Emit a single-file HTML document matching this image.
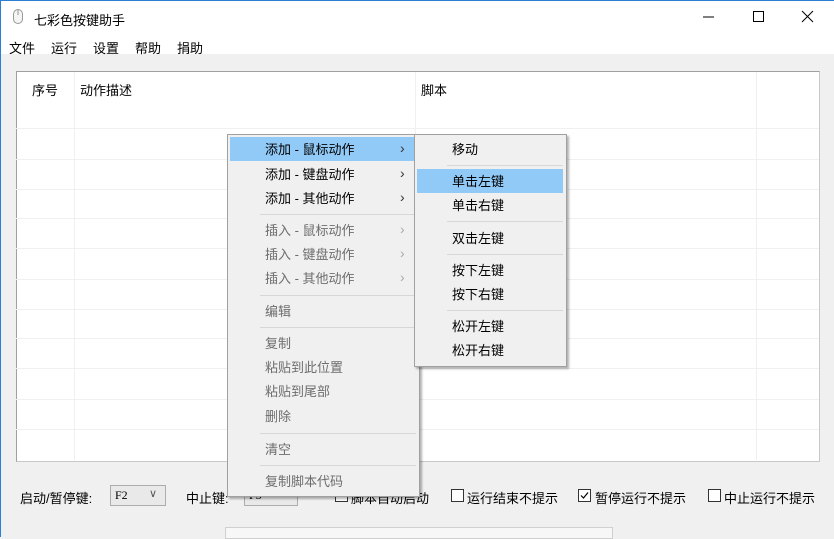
<!DOCTYPE html>
<html><head><meta charset="utf-8"><style>
*{margin:0;padding:0;box-sizing:border-box}
body{width:834px;height:537px;overflow:hidden;background:#f0f0f0;font-family:"Liberation Sans","Noto Sans CJK SC",sans-serif;font-size:13px;color:#000;position:relative}
.a{position:absolute;white-space:nowrap}
.hl{position:absolute;left:16px;width:803px;height:1px;background:#f0f0f0}
.vl{position:absolute;top:72px;width:1px;height:388px;background:#f0f0f0}
.mi{position:absolute;left:265px;line-height:16px}
.dis{color:#6d6d6d}
.sep{position:absolute;height:1px;background:#d7d7d7}
.ar{position:absolute;left:400px;font-size:14px;color:#333}
.si{position:absolute;left:452px;line-height:16px}
.cb{position:absolute;width:13px;height:13px;border:1px solid #333;background:#fff}
</style></head><body>
<div class="a" style="left:0;top:0;width:834px;height:54px;background:#fff"></div>
<div class="a" style="left:0;top:0;width:834px;height:1px;background:#2b7fd3"></div>
<div class="a" style="left:0;top:0;width:1px;height:537px;background:#2b7fd3"></div>
<svg class="a" style="left:12px;top:8px" width="12" height="17"><rect x="1.5" y="1.5" width="9" height="14" rx="4.5" fill="#f4f4f4" stroke="#999"/><line x1="6" y1="2" x2="6" y2="7" stroke="#999"/></svg>
<div class="a" style="left:34px;top:10px;font-size:13px">七彩色按键助手</div>
<svg class="a" style="left:700px;top:10px" width="120" height="14"><line x1="3" y1="7" x2="14" y2="7" stroke="#000"/><rect x="53.5" y="1.5" width="10" height="10" fill="none" stroke="#000"/><path d="M102 1L113 12M113 1L102 12" stroke="#000"/></svg>
<div class="a" style="left:9px;top:38px">文件</div>
<div class="a" style="left:51px;top:38px">运行</div>
<div class="a" style="left:93px;top:38px">设置</div>
<div class="a" style="left:135px;top:38px">帮助</div>
<div class="a" style="left:177px;top:38px">捐助</div>

<div class="a" style="left:16px;top:71px;width:804px;height:391px;background:#fff;border:1px solid #a0a0a0;border-right-color:#c8c8c8;border-bottom-color:#c8c8c8"></div>
<div class="vl" style="left:74px"></div><div class="vl" style="left:415px"></div><div class="vl" style="left:756px"></div>
<div class="hl" style="top:128px"></div><div class="hl" style="top:159px"></div><div class="hl" style="top:189px"></div><div class="hl" style="top:218px"></div><div class="hl" style="top:248px"></div><div class="hl" style="top:279px"></div><div class="hl" style="top:309px"></div><div class="hl" style="top:338px"></div><div class="hl" style="top:368px"></div><div class="hl" style="top:399px"></div><div class="hl" style="top:429px"></div>
<div class="a" style="left:32px;top:80px">序号</div>
<div class="a" style="left:80px;top:80px">动作描述</div>
<div class="a" style="left:421px;top:80px">脚本</div>

<div class="a" style="left:20px;top:488px">启动/暂停键:</div>
<div class="a" style="left:110px;top:485px;width:56px;height:21px;border:1px solid #adadad;background:#e9e9e9;font-size:12px;line-height:19px;padding-left:4px;font-family:'Liberation Serif',serif">F2<span style="position:absolute;left:38px;top:-1px;color:#555;font-family:'Liberation Sans',sans-serif;font-size:11px">∨</span></div>
<div class="a" style="left:186px;top:488px">中止键:</div>
<div class="a" style="left:244px;top:485px;width:54px;height:21px;border:1px solid #adadad;background:#e9e9e9;font-size:12px;line-height:19px;padding-left:4px;font-family:'Liberation Serif',serif">F3</div>
<div class="cb" style="left:335px;top:489px"></div>
<div class="a" style="left:351px;top:488px">脚本自动启动</div>
<div class="cb" style="left:451px;top:489px"></div>
<div class="a" style="left:467px;top:488px">运行结束不提示</div>
<div class="cb" style="left:578px;top:489px"></div>
<svg class="a" style="left:579px;top:490px" width="11" height="11"><path d="M2 5.5L4.5 8L9 2.5" fill="none" stroke="#000" stroke-width="1.2"/></svg>
<div class="a" style="left:595px;top:488px">暂停运行不提示</div>
<div class="cb" style="left:708px;top:489px"></div>
<div class="a" style="left:724px;top:488px">中止运行不提示</div>
<div class="a" style="left:225px;top:527px;width:388px;height:12px;border:1px solid #d0d0d0;background:#f7f7f7"></div>

<div class="a" style="left:227px;top:134px;width:193px;height:363px;background:#f0f0f0;border:1px solid #a0a0a0;box-shadow:2px 2px 2px rgba(0,0,0,.3)"></div>
<div class="a" style="left:230px;top:137px;width:184px;height:24px;background:#91c9f7"></div>
<div class="mi" style="top:142px">添加 - 鼠标动作</div><div class="ar" style="top:140px">›</div>
<div class="mi" style="top:167px">添加 - 键盘动作</div><div class="ar" style="top:165px">›</div>
<div class="mi" style="top:191px">添加 - 其他动作</div><div class="ar" style="top:189px">›</div>
<div class="sep" style="left:260px;width:156px;top:214px"></div>
<div class="mi dis" style="top:223px">插入 - 鼠标动作</div><div class="ar" style="top:221px;color:#aaa">›</div>
<div class="mi dis" style="top:247px">插入 - 键盘动作</div><div class="ar" style="top:245px;color:#aaa">›</div>
<div class="mi dis" style="top:271px">插入 - 其他动作</div><div class="ar" style="top:269px;color:#aaa">›</div>
<div class="sep" style="left:260px;width:156px;top:295px"></div>
<div class="mi dis" style="top:304px">编辑</div>
<div class="sep" style="left:260px;width:156px;top:327px"></div>
<div class="mi dis" style="top:336px">复制</div>
<div class="mi dis" style="top:360px">粘贴到此位置</div>
<div class="mi dis" style="top:384px">粘贴到尾部</div>
<div class="mi dis" style="top:409px">删除</div>
<div class="sep" style="left:260px;width:156px;top:433px"></div>
<div class="mi dis" style="top:442px">清空</div>
<div class="sep" style="left:260px;width:156px;top:465px"></div>
<div class="mi dis" style="top:474px">复制脚本代码</div>

<div class="a" style="left:414px;top:134px;width:153px;height:233px;background:#f0f0f0;border:1px solid #a0a0a0;box-shadow:2px 2px 2px rgba(0,0,0,.3)"></div>
<div class="a" style="left:417px;top:169px;width:146px;height:24px;background:#91c9f7"></div>
<div class="si" style="top:142px">移动</div>
<div class="sep" style="left:447px;width:116px;top:165px"></div>
<div class="si" style="top:174px">单击左键</div>
<div class="si" style="top:198px">单击右键</div>
<div class="sep" style="left:447px;width:116px;top:221px"></div>
<div class="si" style="top:231px">双击左键</div>
<div class="sep" style="left:447px;width:116px;top:254px"></div>
<div class="si" style="top:263px">按下左键</div>
<div class="si" style="top:287px">按下右键</div>
<div class="sep" style="left:447px;width:116px;top:310px"></div>
<div class="si" style="top:319px">松开左键</div>
<div class="si" style="top:343px">松开右键</div>
</body></html>
